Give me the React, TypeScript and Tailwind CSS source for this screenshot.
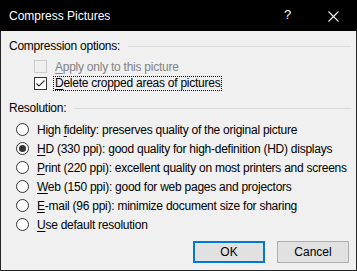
import React from "react";

const font = { fontFamily: '"Liberation Sans", Arial, sans-serif' };

function U({ children }: { children: React.ReactNode }) {
  return <span className="underline underline-offset-2 decoration-1">{children}</span>;
}

function Radio({ checked, children }: { checked?: boolean; children: React.ReactNode }) {
  return (
    <div className="flex items-center h-[19px] pl-[15px]">
      <span className="w-[13px] h-[13px] rounded-full border border-[#333333] bg-white flex items-center justify-center shrink-0">
        {checked && <span className="w-[7px] h-[7px] rounded-full bg-[#333333]" />}
      </span>
      <span className="ml-[8px] text-[12px] leading-[16px] tracking-[-0.25px] text-black whitespace-nowrap">{children}</span>
    </div>
  );
}

export default function App() {
  return (
    <div className="w-[357px] h-[271px] flex flex-col overflow-hidden relative" style={font}>
      {/* Title bar */}
      <div className="h-[31px] bg-black flex items-center relative shrink-0">
        <span className="relative ml-[9px] text-[12px] text-white leading-[16px]">Compress Pictures</span>
        <span className="absolute left-[284px] top-[7px] text-[13px] text-white leading-[16px]">?</span>
        <svg className="absolute left-[328px] top-[11px]" width="11" height="11" viewBox="0 0 11 11">
          <path d="M0.5 0.5 L10.5 10.5 M10.5 0.5 L0.5 10.5" stroke="#ffffff" strokeWidth="1.1" />
        </svg>
      </div>
      {/* Body */}
      <div className="flex-1 bg-[#f0f0f0] border-x border-b border-[#262626] flex flex-col pl-[8px] pr-[5px]">
        <div className="flex items-center h-[16px] mt-[7px]">
          <span className="text-[12px] leading-[16px] tracking-[-0.25px] text-black whitespace-nowrap">Compression options:</span>
          <div className="flex-1 h-px bg-[#dcdcdc] ml-[8px]" />
        </div>
        <div className="flex items-center h-[17px] mt-[4px] pl-[25px]">
          <span className="w-[13px] h-[13px] border border-[#cccccc] bg-[#f0f0f0] shrink-0" />
          <span className="ml-[8px] text-[12px] leading-[16px] tracking-[-0.25px] text-[#838383] whitespace-nowrap">
            <U>A</U>pply only to this picture
          </span>
        </div>
        <div className="flex items-center h-[17px] pl-[25px]">
          <span className="w-[13px] h-[13px] border border-[#333333] bg-white shrink-0 flex items-center justify-center">
            <svg width="11" height="11" viewBox="0 0 11 11">
              <path d="M1.5 5.5 L4 8 L9.5 2.5" stroke="#333333" strokeWidth="1.1" fill="none" />
            </svg>
          </span>
          <span className="ml-[6px] px-[1px] border border-dotted border-black text-[12px] leading-[13px] tracking-[-0.25px] text-black whitespace-nowrap">
            <U>D</U>elete cropped areas of pictures
          </span>
        </div>
        <div className="flex items-center h-[16px] mt-[8px]">
          <span className="text-[12px] leading-[16px] tracking-[-0.25px] text-black whitespace-nowrap">Resolution:</span>
          <div className="flex-1 h-px bg-[#dcdcdc] ml-[8px]" />
        </div>
        <div className="flex flex-col mt-[4px] -ml-[8px]">
          <Radio>High <U>f</U>idelity: preserves quality of the original picture</Radio>
          <Radio checked><U>H</U>D (330 ppi): good quality for high-definition (HD) displays</Radio>
          <Radio><U>P</U>rint (220 ppi): excellent quality on most printers and screens</Radio>
          <Radio><U>W</U>eb (150 ppi): good for web pages and projectors</Radio>
          <Radio><U>E</U>-mail (96 ppi): minimize document size for sharing</Radio>
          <Radio><U>U</U>se default resolution</Radio>
        </div>
        <div className="flex justify-end gap-[12px] mt-[7px] pr-[2px]">
          <button className="w-[72px] h-[22px] border-2 border-[#0078d7] bg-[#e1e1e1] text-[12px] text-black leading-[16px]">
            OK
          </button>
          <button className="w-[72px] h-[22px] border border-[#adadad] bg-[#e1e1e1] text-[12px] text-black leading-[16px]">
            Cancel
          </button>
        </div>
      </div>
    </div>
  );
}
